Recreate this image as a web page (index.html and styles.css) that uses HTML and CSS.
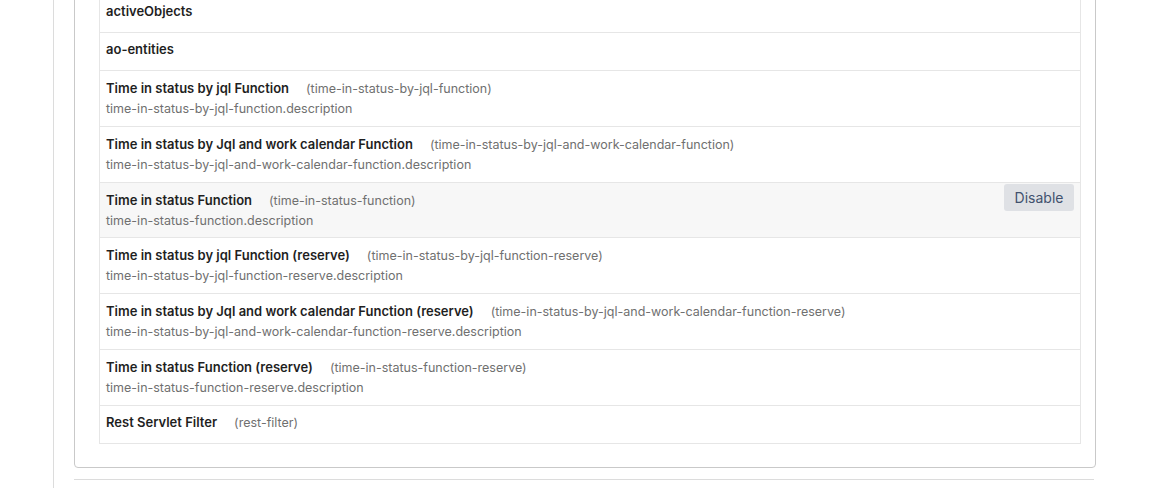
FILE: index.html
```html
<!DOCTYPE html>
<html>
<head>
<meta charset="utf-8">
<link rel="stylesheet" href="styles.css">
</head>
<body>
<div class="page">
  <div class="card">
    <div class="modules">
      <div class="row single"><div class="info"><div class="line"><span class="name">activeObjects</span></div></div></div>
      <div class="row single"><div class="info"><div class="line"><span class="name">ao-entities</span></div></div></div>
      <div class="row"><div class="info"><div class="line"><span class="name">Time in status by jql Function</span><span class="key">(time-in-status-by-jql-function)</span></div><div class="desc">time-in-status-by-jql-function.description</div></div></div>
      <div class="row"><div class="info"><div class="line"><span class="name">Time in status by Jql and work calendar Function</span><span class="key">(time-in-status-by-jql-and-work-calendar-function)</span></div><div class="desc">time-in-status-by-jql-and-work-calendar-function.description</div></div></div>
      <div class="row hover"><div class="info"><div class="line"><span class="name">Time in status Function</span><span class="key">(time-in-status-function)</span></div><div class="desc">time-in-status-function.description</div></div><button class="btn">Disable</button></div>
      <div class="row"><div class="info"><div class="line"><span class="name">Time in status by jql Function (reserve)</span><span class="key">(time-in-status-by-jql-function-reserve)</span></div><div class="desc">time-in-status-by-jql-function-reserve.description</div></div></div>
      <div class="row"><div class="info"><div class="line"><span class="name">Time in status by Jql and work calendar Function (reserve)</span><span class="key">(time-in-status-by-jql-and-work-calendar-function-reserve)</span></div><div class="desc">time-in-status-by-jql-and-work-calendar-function-reserve.description</div></div></div>
      <div class="row"><div class="info"><div class="line"><span class="name">Time in status Function (reserve)</span><span class="key">(time-in-status-function-reserve)</span></div><div class="desc">time-in-status-function-reserve.description</div></div></div>
      <div class="row single"><div class="info"><div class="line"><span class="name">Rest Servlet Filter</span><span class="key">(rest-filter)</span></div></div></div>
    </div>
  </div>
  <div class="next"></div>
</div>
</body>
</html>
```
FILE: styles.css
```css
html, body {
  margin: 0;
  padding: 0;
  background: #fff;
  overflow: hidden;
  height: 488px;
}
body {
  font-family: Inter, "Noto Sans", "Liberation Sans", sans-serif;
  font-size: 13px;
  color: #222;
}
.page {
  margin-left: 53px;
  border-left: 1px solid #dcdcdc;
  padding-left: 20px;
  min-height: 560px;
  width: 1022px;
  margin-top: -31px;
}
.card {
  border: 1px solid #c9c9c9;
  border-radius: 4px;
  padding: 24px 14px 23px 24px;
}
.modules {
  border: 1px solid #e6e6e6;
}
.row {
  display: flex;
  align-items: flex-start;
  padding: 7px 6px 7.84px 6px;
  border-top: 1px solid #e6e6e6;
}
.row.single {
  padding: 6px 6px 10px 6px;
}
.row:first-child {
  border-top: none;
}
.row.hover {
  background: #f7f7f7;
}
.info {
  flex: 1;
}
.line {
  line-height: 21px;
}
.name {
  font-weight: 600;
  color: #1f1f1f;
}
.key {
  margin-left: 17px;
  color: #707070;
  font-size: 12.5px;
}
.desc {
  line-height: 19px;
  color: #707070;
  font-size: 12.5px;
}
.btn {
  margin-top: -6px;
  height: 27px;
  width: 70px;
  border: none;
  border-radius: 3px;
  background: #dfe1e5;
  color: #42526e;
  font-family: inherit;
  font-size: 14px;
  padding: 0;
}
.next {
  margin-top: 11px;
  border-top: 1px solid #dcdcdc;
  width: 1020px;
}
```
